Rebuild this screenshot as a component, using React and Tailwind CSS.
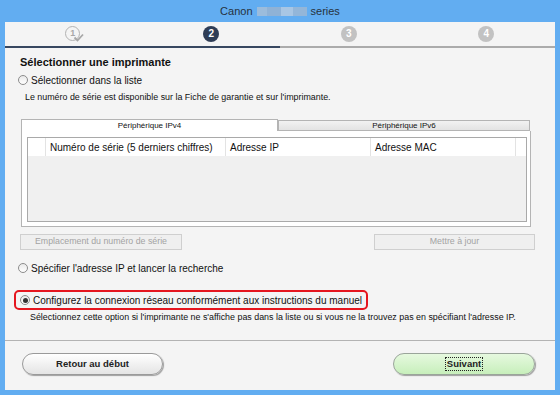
import React from "react";

function Radio({ checked }) {
  return (
    <span className="relative inline-flex w-[10px] h-[10px] rounded-full border border-[#8c8c8c] bg-gradient-to-b from-[#e9e9e9] to-[#ffffff] items-center justify-center shrink-0">
      {checked && <span className="w-[5px] h-[5px] rounded-full bg-[#333]" />}
    </span>
  );
}

export default function App() {
  return (
    <div className="w-[560px] h-[395px] bg-[#62adf1] flex flex-col overflow-hidden font-['Liberation_Sans',Arial,sans-serif] text-[#111]">
      {/* Title bar */}
      <div className="h-[22px] flex items-center justify-center text-[11px] text-[#27323d] gap-[4px]">
        <span>Canon</span>
        <span className="flex h-[9px] w-[50px]">
          <span className="w-[10px] bg-[#9bbcdc]" />
          <span className="w-[14px] bg-[#8fb2d6]" />
          <span className="w-[12px] bg-[#a8c6e4]" />
          <span className="w-[14px] bg-[#93b6d9]" />
        </span>
        <span>series</span>
      </div>

      <div className="mx-[5px] mb-[5px] flex-1 bg-[#f4f4f4] flex flex-col">
        {/* Steps */}
        <div className="h-[24px] grid grid-cols-4 items-center justify-items-center">
          <div className="relative w-[19px] h-[16px] ml-[2px]">
            <span className="absolute left-0 top-0 w-[15px] h-[15px] rounded-full border-[1.5px] border-[#b3b3b3] flex items-center justify-center text-[9px] font-bold text-[#a8a8a8] leading-none">1</span>
            <svg className="absolute left-[8px] top-[7px]" width="11" height="9" viewBox="0 0 11 9">
              <path d="M1.5 4.5 L4.5 7.5 L10 1.5" fill="none" stroke="#a8a8a8" strokeWidth="1.8" />
            </svg>
          </div>
          <span className="w-[16px] h-[16px] rounded-full bg-[#2f3d56] text-white text-[10px] font-bold flex items-center justify-center leading-none">2</span>
          <span className="w-[16px] h-[16px] rounded-full bg-[#c2c2c2] text-white text-[10px] font-bold flex items-center justify-center leading-none">3</span>
          <span className="w-[16px] h-[16px] rounded-full bg-[#c2c2c2] text-white text-[10px] font-bold flex items-center justify-center leading-none">4</span>
        </div>
        <div className="h-[2px] flex">
          <div className="w-[275px] bg-[#374760]" />
          <div className="flex-1 bg-[#ababab]" />
        </div>

        {/* Heading */}
        <div className="mt-[7px] ml-[15px] h-[14px] leading-[14px] text-[11px] font-bold">Sélectionner une imprimante</div>
        <div className="mt-[4px] ml-[13px] h-[14px] flex items-center gap-[3px] text-[10px]">
          <Radio />
          <span>Sélectionner dans la liste</span>
        </div>
        <div className="mt-[4px] ml-[20px] h-[12px] leading-[12px] text-[8.9px]">
          Le numéro de série est disponible sur la Fiche de garantie et sur l'imprimante.
        </div>

        {/* Tabs */}
        <div className="mt-[16px] ml-[16px] w-[510px]">
          <div className="flex h-[12px] items-end">
            <div className="w-[257px] h-[12px] bg-white border-t border-l border-r border-[#b4b4b4] flex items-center justify-center text-[8px] leading-none">
              Périphérique IPv4
            </div>
            <div className="w-[252px] h-[11px] bg-gradient-to-b from-[#f2f2f2] to-[#e3e3e3] border border-[#b4b4b4] flex items-center justify-center text-[8px] leading-none">
              Périphérique IPv6
            </div>
          </div>
          <div className="h-[96px] bg-white border-l border-r border-b border-[#b4b4b4] pt-[6px] pl-[5px] pr-[3px] pb-[4px]">
            <div className="h-full border border-[#a9a9a9] bg-[#f0f0f0] flex flex-col">
              <div className="h-[18px] bg-white flex text-[10px] items-center">
                <div className="w-[18px] h-full border-r border-[#e3e3e3]" />
                <div className="w-[180px] h-full border-r border-[#e3e3e3] pl-[4px] flex items-center">Numéro de série (5 derniers chiffres)</div>
                <div className="w-[145px] h-full border-r border-[#e3e3e3] pl-[4px] flex items-center">Adresse IP</div>
                <div className="w-[145px] h-full border-r border-[#e3e3e3] pl-[4px] flex items-center">Adresse MAC</div>
                <div className="flex-1 h-full" />
              </div>
            </div>
          </div>
        </div>

        {/* Disabled buttons */}
        <div className="mt-[7px] ml-[15px] mr-[20px] flex justify-between">
          <div className="w-[162px] h-[16px] border border-[#cfcfcf] bg-[#efefef] flex items-center justify-center text-[8.8px] text-[#a3a3a3]">
            Emplacement du numéro de série
          </div>
          <div className="w-[161px] h-[16px] border border-[#cfcfcf] bg-[#efefef] flex items-center justify-center text-[8.8px] text-[#a3a3a3]">
            Mettre à jour
          </div>
        </div>

        <div className="mt-[11px] ml-[13px] h-[14px] flex items-center gap-[3px] text-[10px]">
          <Radio />
          <span>Spécifier l'adresse IP et lancer la recherche</span>
        </div>

        <div className="mt-[15px] ml-[9px] w-[354px] h-[20px] border-2 border-[#e5161f] rounded-[5px] flex items-center gap-[3px] pl-[4px] text-[10px]">
          <Radio checked />
          <span>Configurez la connexion réseau conformément aux instructions du manuel</span>
        </div>
        <div className="mt-[1px] ml-[25px] h-[12px] leading-[12px] text-[8.9px]">
          Sélectionnez cette option si l'imprimante ne s'affiche pas dans la liste ou si vous ne la trouvez pas en spécifiant l'adresse IP.
        </div>

        <div className="mt-[17px] h-px bg-[#b3b3b3]" />

        <div className="mt-[12px] ml-[17px] mr-[20px] flex justify-between">
          <div className="w-[141px] h-[22px] rounded-full border border-[#9a9a9a] bg-gradient-to-b from-[#ffffff] to-[#e4e4e4] shadow-[1px_1px_1px_rgba(0,0,0,0.35)] flex items-center justify-center text-[9.5px] font-bold text-[#222]">
            Retour au début
          </div>
          <div className="w-[142px] h-[22px] rounded-full border border-[#9aa59a] bg-gradient-to-b from-[#e6f9df] to-[#c7efbb] shadow-[1px_1px_1px_rgba(0,0,0,0.35)] flex items-center justify-center text-[9.5px] font-bold text-[#222]">
            <span className="border border-dotted border-[#222] px-[1px] leading-[12px]">Suivant</span>
          </div>
        </div>
      </div>
    </div>
  );
}
